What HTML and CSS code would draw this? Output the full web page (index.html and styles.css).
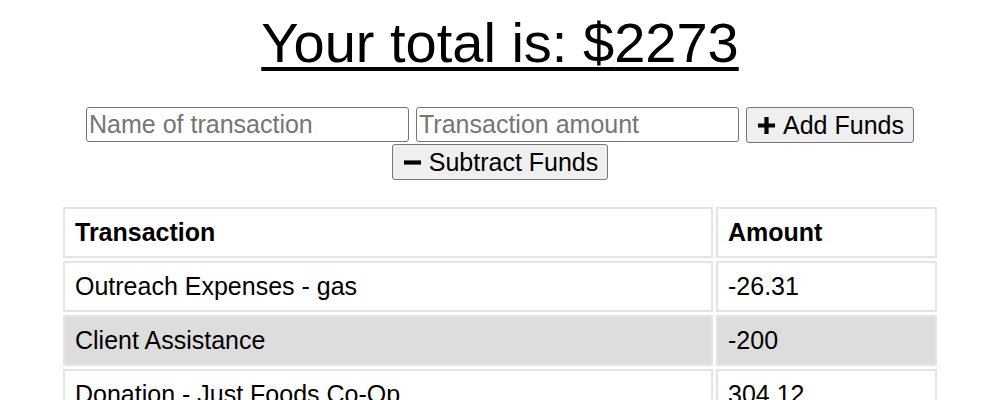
FILE: index.html
```html
<!DOCTYPE html>
<html lang="en">
<head>
<meta charset="utf-8">
<title>Budget Tracker</title>
<link rel="stylesheet" href="styles.css">
</head>
<body>
<div class="wrapper">
  <h1 class="total"><u>Your total is: $<span id="total">2273</span></u></h1>
  <div class="form">
    <input type="text" class="field" placeholder="Name of transaction">
    <input type="number" class="field" placeholder="Transaction amount">
    <button class="btn" type="button"><svg class="ico" viewBox="0 0 16 16"><path d="M6.4 1.5h3.2v4.9h4.9v3.2H9.6v4.9H6.4V9.6H1.5V6.4h4.9z"/></svg>Add Funds</button>
    <button class="btn" type="button"><svg class="ico" viewBox="0 0 16 16"><path d="M1.5 6.4h13v3.2h-13z"/></svg>Subtract Funds</button>
  </div>
  <table class="ledger">
    <thead>
      <tr><th class="c-name">Transaction</th><th class="c-amt">Amount</th></tr>
    </thead>
    <tbody>
      <tr><td>Outreach Expenses - gas</td><td>-26.31</td></tr>
      <tr class="alt"><td>Client Assistance</td><td>-200</td></tr>
      <tr><td>Donation - Just Foods Co-Op</td><td>304.12</td></tr>
      <tr class="alt"><td>Office Supplies</td><td>-42.50</td></tr>
    </tbody>
  </table>
</div>
</body>
</html>
```
FILE: styles.css
```css
html, body {
  margin: 0;
  padding: 0;
  background: #fff;
}
body {
  padding: 8px;
  font-family: "Liberation Sans", Arial, sans-serif;
  color: #000;
}
.total {
  margin: 3px 0 32px;
  text-align: center;
  font-size: 56px;
  font-weight: normal;
  line-height: 1.15;
}
.total u {
  text-decoration-thickness: 4px;
  text-underline-offset: 5px;
}
.form {
  display: flex;
  flex-wrap: wrap;
  justify-content: center;
  column-gap: 7px;
  row-gap: 1px;
}
.field {
  box-sizing: border-box;
  width: 323px;
  height: 35px;
  padding: 0 2px;
  border: 1px solid #767676;
  border-radius: 3px;
  font-family: "Liberation Sans", Arial, sans-serif;
  font-size: 25px;
  color: #000;
  background: #fff;
}
.field::placeholder {
  color: #757575;
}
.btn {
  box-sizing: border-box;
  height: 36px;
  display: inline-flex;
  align-items: center;
  gap: 6px;
  padding: 0 9px;
  border: 1px solid #767676;
  border-radius: 3px;
  background: #efefef;
  font-family: "Liberation Sans", Arial, sans-serif;
  font-size: 25px;
  color: #000;
}
.ico {
  width: 21px;
  height: 21px;
  fill: #000;
}
.ledger {
  width: 880px;
  margin: 24px auto 0;
  border-collapse: separate;
  border-spacing: 3px;
  font-size: 25px;
}
.ledger th,
.ledger td {
  border: 2px solid #e4e4e4;
  padding: 10px 10px;
  text-align: left;
  line-height: 27px;
}
.ledger th {
  font-weight: bold;
}
.c-amt {
  width: 197px;
}
.ledger tr.alt td {
  background: #dddddd;
}
```
